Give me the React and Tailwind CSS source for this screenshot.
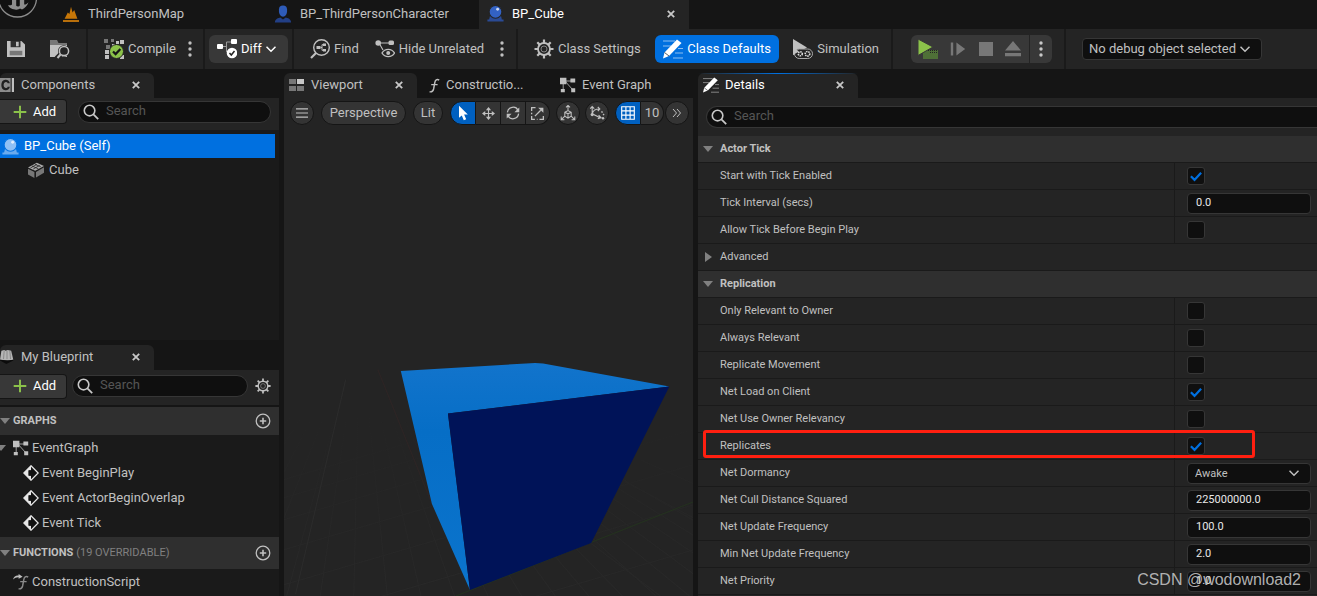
import { useState } from "react";

const graphEvents = ["Event BeginPlay", "Event ActorBeginOverlap", "Event Tick"];

const detailRows = [
  { type: "header", label: "Actor Tick" },
  { type: "check", label: "Start with Tick Enabled", value: true },
  { type: "text", label: "Tick Interval (secs)", value: "0.0" },
  { type: "check", label: "Allow Tick Before Begin Play", value: false },
  { type: "advanced", label: "Advanced" },
  { type: "header", label: "Replication" },
  { type: "check", label: "Only Relevant to Owner", value: false },
  { type: "check", label: "Always Relevant", value: false },
  { type: "check", label: "Replicate Movement", value: false },
  { type: "check", label: "Net Load on Client", value: true },
  { type: "check", label: "Net Use Owner Relevancy", value: false },
  { type: "check", label: "Replicates", value: true, marked: true },
  { type: "select", label: "Net Dormancy", value: "Awake" },
  { type: "text", label: "Net Cull Distance Squared", value: "225000000.0" },
  { type: "text", label: "Net Update Frequency", value: "100.0" },
  { type: "text", label: "Min Net Update Frequency", value: "2.0" },
  { type: "text", label: "Net Priority", value: "1.0" },
];

/* ---------- icons ---------- */

const Icon = ({ size = 20, className = "", children }) => (
  <svg
    width={size}
    height={size}
    viewBox="0 0 20 20"
    fill="none"
    className={`shrink-0 ${className}`}
    aria-hidden="true"
  >
    {children}
  </svg>
);

const CloseIcon = () => (
  <Icon size={8}>
    <path d="M2 2l16 16M18 2L2 18" stroke="currentColor" strokeWidth="4.5" />
  </Icon>
);

const SearchIcon = () => (
  <Icon size={16} className="text-[#c8c8c8]">
    <circle cx="8.2" cy="8.2" r="6.6" stroke="currentColor" strokeWidth="2" />
    <path d="M13 13l6 6" stroke="currentColor" strokeWidth="2.2" />
  </Icon>
);

const PlusIcon = () => (
  <Icon size={14} className="text-[#8bc24a]">
    <path d="M10 1v18M1 10h18" stroke="currentColor" strokeWidth="2.8" />
  </Icon>
);

const ChevronIcon = () => (
  <Icon size={10}>
    <path d="M1 5.5l9 9 9-9" stroke="currentColor" strokeWidth="3" />
  </Icon>
);

const DotsIcon = () => (
  <svg width="4" height="16" viewBox="0 0 4 16" fill="currentColor" aria-hidden="true">
    <circle cx="2" cy="2" r="1.7" />
    <circle cx="2" cy="8" r="1.7" />
    <circle cx="2" cy="14" r="1.7" />
  </svg>
);

const ArrowDown = () => (
  <svg width="10" height="6" viewBox="0 0 10 6" className="shrink-0" aria-hidden="true">
    <path d="M0 0h10L5 6z" fill="#808080" />
  </svg>
);

const ArrowRight = () => (
  <svg width="7" height="10" viewBox="0 0 7 10" className="shrink-0" aria-hidden="true">
    <path d="M0 0l7 5-7 5z" fill="#808080" />
  </svg>
);

const GearIcon = ({ size }) => (
  <Icon size={size}>
    <circle cx="10" cy="10" r="6" stroke="currentColor" strokeWidth="1.8" />
    <circle cx="10" cy="10" r="3" stroke="currentColor" strokeWidth="1" opacity=".6" />
    <path
      d="M10 0.5v4M10 15.5v4M0.5 10h4M15.5 10h4M3.3 3.3l2.8 2.8M13.9 13.9l2.8 2.8M16.7 3.3l-2.8 2.8M6.1 13.9l-2.8 2.8"
      stroke="currentColor"
      strokeWidth="2.2"
    />
  </Icon>
);

const UnrealLogo = () => (
  <svg width="38" height="18" viewBox="0 0 38 18" className="shrink-0" aria-hidden="true">
    <circle cx="17.5" cy="-2" r="19" fill="#111" stroke="#8d8d8d" strokeWidth="1.3" />
    <path
      d="M8 5c1 2.500 3 4 7 4.600 2 .5 4 0 5-1l2 1c3-1.400 5.500-4.200 6.500-7.400-1.800 1.900-3.300 2.700-4.300 2.200V0h-4.400v5.500c-.6 1.300-2.600 1.500-3.600.3V0H12v4.500C11 5.500 9.500 5.500 8 5z"
      fill="#8d8d8d"
    />
  </svg>
);

const LevelIcon = () => (
  <Icon size={16}>
    <path d="M0 17.500h20v2.500H0z" fill="#b86f0b" />
    <path d="M2 16l4-8 2 2 2-9 2 7 2-3 4 11z" fill="#c77708" />
  </Icon>
);

const CharacterIcon = () => (
  <Icon size={18}>
    <path d="M5.500 5a4.500 4.500 0 019 0v2c0 3-2 6-4.500 6S5.500 10 5.500 7z" fill="#2e5bb8" />
    <path d="M1 19.500c0-4 4-5 6-5.500l3 2 3-2c2 .5 6 1.500 6 5.500z" fill="#223f85" />
  </Icon>
);

const SphereIcon = ({ ball, base, gap }) => (
  <Icon size={17}>
    <path d="M0.500 19.500v-2.500h2l1.500-6h12l1.500 6h2v2.500z" fill={base} />
    <circle cx="10" cy="8" r="7.500" fill={ball} stroke={gap} strokeWidth="1.200" />
    <circle cx="12.500" cy="5" r="1.700" fill="#fff" opacity=".75" />
  </Icon>
);

const SaveIcon = () => (
  <Icon size={18}>
    <path d="M0 1h16l4 4v14H0z" fill="#c0c0c0" />
    <path d="M4 1h11v7H4z" fill="#303030" />
    <path d="M10 2h3v5h-3z" fill="#c0c0c0" />
    <path d="M3 12h14v5H3z" fill="#777" />
  </Icon>
);

const BrowseIcon = () => (
  <Icon size={20}>
    <path d="M0 1h7l1.500 3H17v4H0z" fill="#777" />
    <path d="M0 6h17v12H0z" fill="#c0c0c0" />
    <circle cx="13.800" cy="12" r="5.800" fill="#242424" />
    <path d="M6.500 19.500l4-4" stroke="#242424" strokeWidth="5" />
    <circle cx="14" cy="12" r="4.600" stroke="#c0c0c0" strokeWidth="1.500" />
    <path d="M10.500 15.500l-3 3.500" stroke="#c0c0c0" strokeWidth="2" />
  </Icon>
);

const CompileIcon = () => (
  <Icon size={20}>
    <path d="M0 0h4v4H0zM7 0h3v3H7zM2 6h4v4H2z" fill="#777" />
    <path d="M16 1h4v4h-4zM8 5h3v3H8zM12 2h3v3h-3zM1 11h4v4H1zM1 16h4v4H1zM16 16h4v4h-4z" fill="#c0c0c0" />
    <circle cx="12.500" cy="12.500" r="7" fill="#8bc24a" stroke="#242424" strokeWidth="1" />
    <path d="M9 12.500l2.600 2.600 4.800-5" stroke="#161616" strokeWidth="2.200" />
  </Icon>
);

const DiffIcon = () => (
  <Icon size={20} className="text-white">
    <path d="M5 7.500h4.500M14 3H9.500v10" stroke="#9a9a9a" strokeWidth="1" />
    <rect x="0" y="5" width="6" height="5" rx="1" fill="currentColor" />
    <rect x="14" y="0" width="6" height="5" rx="1" fill="currentColor" />
    <circle cx="15" cy="14" r="5.300" fill="currentColor" />
    <path d="M12.500 14l1.800 2 3.200-4" stroke="#222" strokeWidth="1.500" />
  </Icon>
);

const FindIcon = () => (
  <Icon size={20}>
    <circle cx="11.500" cy="8.500" r="7.800" stroke="currentColor" strokeWidth="1.400" />
    <path d="M6 14l-5 5" stroke="currentColor" strokeWidth="2.200" />
    <path d="M6.500 7h4v3h-4zM13 4.500h3v2.500h-3zM13 10h3v2.500h-3z" fill="currentColor" />
    <path d="M10.500 8.500h1.500M13 5.700h-1v5.600h1" stroke="currentColor" />
  </Icon>
);

const HideIcon = () => (
  <Icon size={20}>
    <path d="M4 4h12M4 4l4 7" stroke="currentColor" strokeWidth="1.100" />
    <circle cx="3.200" cy="4" r="2.800" fill="currentColor" />
    <rect x="13.500" y="1.500" width="5.500" height="4.500" rx="1.500" fill="currentColor" />
    <path d="M7 14c3-4.800 9.500-4.800 12.500 0-3 4.800-9.500 4.800-12.500 0z" stroke="currentColor" strokeWidth="1.400" />
    <circle cx="13.200" cy="14" r="2" fill="currentColor" />
  </Icon>
);

const PencilIcon = ({ size = 20 }) => (
  <Icon size={size} className="text-white">
    <path d="M0 2h12M0 7h8M12 14h8M10 19h10M15 9.500h5" stroke="currentColor" strokeWidth="1" opacity=".55" />
    <path d="M0 19.500l1.500-6L14 0.500l4.500 3.500L6 17z" fill="currentColor" />
    <path d="M1.500 13.500L6 17" stroke="#333" strokeWidth=".8" />
  </Icon>
);

const SimulationIcon = () => (
  <Icon size={20}>
    <path d="M0 0l14 8.500L0 16z" fill="currentColor" />
    <rect x="1.500" y="10" width="18" height="9.500" rx="4.700" fill="#242424" stroke="#aaa" strokeWidth="1" />
    <path d="M0 8v8l6-3.600z" fill="currentColor" />
    <circle cx="7.300" cy="14.800" r="2" stroke="#ddd" strokeWidth="1.600" strokeDasharray="1.400 .7" />
    <circle cx="14.500" cy="14.800" r="2.300" stroke="#ddd" strokeWidth="1.600" strokeDasharray="1.400 .7" />
  </Icon>
);

const PlayIcon = () => (
  <Icon size={20}>
    <path d="M5 11h15v9H5z" fill="#4f7037" />
    <path d="M10 11.500h10M12 13.500h8" stroke="#242424" strokeWidth="1" strokeDasharray="1 1" />
    <path d="M0 0l15 8L0 16.500z" fill="#8bc24a" stroke="#383838" strokeWidth="1" />
  </Icon>
);

const GraphIcon = () => (
  <Icon size={16}>
    <path d="M5 5h11M4 5v12M7 6l9 10" stroke="currentColor" strokeWidth="1" />
    <path d="M0 1h8v8H0zM13 2h6v5h-6zM1 15h5v4H1zM14 14h5v5h-5z" fill="currentColor" />
  </Icon>
);

const ComponentsIcon = () => (
  <Icon size={14}>
    <path d="M0 0h20v20H0z" fill="#8c8c8c" />
    <path d="M12.500 7.500c-.5-5-9-5-9 2.500s8.500 7.500 9 2.500" stroke="#202020" strokeWidth="3.200" />
    <path d="M16 0v20" stroke="#202020" strokeWidth="1.600" />
    <path d="M17 0h3v20h-3z" fill="#c0c0c0" />
  </Icon>
);

const BookIcon = () => (
  <Icon size={14}>
    <path d="M0 14L2 1l4-1 2 1 3-1 5 1 3 13-6 1z" fill="#b5b5b5" />
    <path d="M0 15l9 5 10-5v-1l-9 1-10-1z" fill="#0c0c0c" />
    <path d="M6 1L5 13M10 1v12M14 1l1 12" stroke="#777" />
  </Icon>
);

const ViewportIcon = () => (
  <svg width="15" height="12" viewBox="0 0 15 12" aria-hidden="true">
    <path d="M0 0h7v5H0zM0 7h7v5H0zM8 7h7v5H8z" fill="#777" />
    <path d="M8 0h7v5H8z" fill="#c8c8c8" />
  </svg>
);

// italic f drawn as a stroke
const FunctionIcon = ({ arrow }) => (
  <Icon size={16}>
    {arrow && (
      <path d="M0 7c1-4 4-5.500 7-5V0l5 3.500L7 6V4.200C4.500 4 2.500 5 0 7z" fill="#c0c0c0" />
    )}
    <path
      d="M19 4c-3-2-5 0-5.500 3L12 15c-.7 3-2 4-5 3.500M9 9.500h8"
      stroke={arrow ? "#8a8a8a" : "currentColor"}
      strokeWidth="1.800"
    />
  </Icon>
);

const EventIcon = () => (
  <Icon size={16} className="text-[#e6e6e6]">
    <path d="M10 1l9 9-9 9-9-9z" fill="#111" stroke="currentColor" strokeWidth="1.600" />
    <path d="M10 1v5.500H7v7h3V19l-9-9z" fill="currentColor" />
    <path d="M7 7h4V4.500l4.500 5.500-4.500 5.500V13H7z" fill="#111" />
  </Icon>
);

const CubeIcon = () => (
  <Icon size={16}>
    <path d="M0 7l11-6 9 4-11 6z" fill="#aaa" />
    <path d="M0 8.500l8 4v7.500l-8-4.500zM10 12.500l10-6v7l-10 6z" fill="#777" />
    <path d="M3 7.500l8-4.500M6.500 8.800l8-4.500M5 5l8 3.500M9 3l7 3" stroke="#252525" strokeWidth="1" />
  </Icon>
);

const AddCircleIcon = () => (
  <Icon size={16}>
    <circle cx="10" cy="10" r="8.500" stroke="currentColor" strokeWidth="1.600" />
    <path d="M10 6v8M6 10h8" stroke="currentColor" strokeWidth="2" />
  </Icon>
);

/* ---------- shared parts ---------- */

const PanelTab = ({ icon, label, className = "", active = true, closable = true, hot }) => (
  <div
    className={`flex h-[25px] shrink-0 items-center pb-[2px] ${
      active ? "rounded-t-md bg-[#242424]" : ""
    } ${hot ? "relative text-white" : ""} ${className}`}
  >
    {hot && (
      <span className="absolute inset-x-0 top-0 h-px bg-linear-to-r from-transparent via-[#0070e0] to-transparent" />
    )}
    {icon}
    <span>{label}</span>
    {closable && (
      <button type="button" aria-label={`Close ${label}`} className="ml-auto text-[#c8c8c8]">
        <CloseIcon />
      </button>
    )}
  </div>
);

const SearchBox = ({ label, className = "" }) => (
  <label
    className={`flex items-center gap-[7px] border border-[#363636] bg-[#0f0f0f] pl-1 ${className}`}
  >
    <SearchIcon />
    <input
      type="text"
      aria-label={label}
      placeholder="Search"
      className="h-5 w-full min-w-0 bg-transparent pb-[2px] text-[13px] placeholder-[#555] outline-none"
    />
  </label>
);

const AddButton = () => (
  <button
    type="button"
    className="flex h-[25px] w-[67px] shrink-0 items-center gap-[6px] rounded-r-sm border border-l-0 border-[#151515] bg-[#383838] pl-[13px] text-white"
  >
    <PlusIcon />
    Add
  </button>
);

const Divider = () => <span className="h-10 w-[2px] shrink-0 bg-[#1a1a1a]" />;

const ToolButton = ({ icon, children, className = "" }) => (
  <button
    type="button"
    className={`flex h-7 shrink-0 items-center gap-1 whitespace-nowrap ${className}`}
  >
    {icon}
    {children}
  </button>
);

/* ---------- page sections ---------- */

const FileTabs = () => (
  <nav className="flex h-[29px] items-center">
    <div className="flex w-[63px] shrink-0 self-start">
      <UnrealLogo />
    </div>
    <div className="flex h-full grow items-center">
      <a href="#map" className="flex w-[211px] shrink-0 items-center gap-[9px] pb-[2px]">
        <LevelIcon />
        ThirdPersonMap
      </a>
      <a href="#character" className="flex w-[205px] shrink-0 items-center gap-2 pb-[2px]">
        <CharacterIcon />
        BP_ThirdPersonCharacter
      </a>
      <div className="flex h-full w-[210px] shrink-0 items-center bg-[#242424] pr-[14px] pb-[2px] pl-2 text-white">
        <SphereIcon ball="#3362c4" base="#2a4a94" gap="#242424" />
        <a href="#cube" className="ml-2">
          BP_Cube
        </a>
        <button type="button" aria-label="Close BP_Cube" className="ml-auto text-[#c8c8c8]">
          <CloseIcon />
        </button>
      </div>
    </div>
  </nav>
);

const Toolbar = () => (
  <header className="flex h-10 items-center bg-[#242424]">
    <div className="flex w-[86px] shrink-0 items-center gap-[25px] pl-[7px]">
      <button type="button" aria-label="Save">
        <SaveIcon />
      </button>
      <button type="button" aria-label="Browse">
        <BrowseIcon />
      </button>
    </div>
    <Divider />
    <div className="flex w-[115px] shrink-0 items-center justify-between pr-[11px] pl-4">
      <ToolButton icon={<CompileIcon />}>Compile</ToolButton>
      <button type="button" aria-label="Compile options">
        <DotsIcon />
      </button>
    </div>
    <Divider />
    <div className="w-[87px] shrink-0 px-1">
      <ToolButton icon={<DiffIcon />} className="w-full rounded-md bg-[#383838] pl-2 text-white">
        Diff <ChevronIcon />
      </ToolButton>
    </div>
    <Divider />
    <div className="flex w-[222px] shrink-0 items-center justify-between pr-3 pl-4">
      <ToolButton icon={<FindIcon />}>Find</ToolButton>
      <ToolButton icon={<HideIcon />}>Hide Unrelated</ToolButton>
      <button type="button" aria-label="Hide options">
        <DotsIcon />
      </button>
    </div>
    <Divider />
    <div className="flex w-[373px] shrink-0 items-center justify-between pr-3 pl-4">
      <ToolButton icon={<GearIcon size={20} />}>Class Settings</ToolButton>
      <ToolButton icon={<PencilIcon />} className="rounded-md bg-[#0070e0] px-2 text-white">
        Class Defaults
      </ToolButton>
      <ToolButton icon={<SimulationIcon />}>Simulation</ToolButton>
    </div>
    <Divider />
    <div className="w-[171px] shrink-0 pl-[18px]">
      <div className="flex h-7 w-[141px] overflow-hidden rounded-md bg-[#383838] text-[#777]">
        <div className="flex w-[118px] items-center justify-between pr-2 pl-[7px]">
          <button type="button" aria-label="Play">
            <PlayIcon />
          </button>
          <button type="button" aria-label="Step">
            <Icon size={16}>
              <path d="M1 2h3v16H1zM8 2l11 8-11 8z" fill="currentColor" />
            </Icon>
          </button>
          <button type="button" aria-label="Stop">
            <Icon size={14}>
              <path d="M0 0h20v20H0z" fill="currentColor" />
            </Icon>
          </button>
          <button type="button" aria-label="Eject">
            <Icon size={16}>
              <path d="M10 0l10 12H0zM0 15h20v4H0z" fill="currentColor" />
            </Icon>
          </button>
        </div>
        <button
          type="button"
          aria-label="Play options"
          className="flex grow items-center justify-center border-l border-[#242424] text-[#c8c8c8]"
        >
          <DotsIcon />
        </button>
      </div>
    </div>
    <Divider />
    <label className="ml-4 grid w-[180px] shrink-0 items-center">
      <select
        aria-label="Debug object"
        className="col-start-1 row-start-1 h-[22px] w-full appearance-none rounded border border-[#363636] bg-[#0f0f0f] pl-[6px] text-[13px] leading-5"
      >
        <option>No debug object selected</option>
      </select>
      <span className="pointer-events-none col-start-1 row-start-1 mr-3 justify-self-end">
        <ChevronIcon />
      </span>
    </label>
  </header>
);

const ComponentsPanel = () => (
  <section className="flex h-[267px] flex-col">
    <PanelTab icon={<ComponentsIcon />} label="Components" className="w-[154px] gap-[7px] pr-[14px]" />
    <div className="flex h-8 shrink-0 items-start gap-[11px] bg-[#242424] pt-px pr-2">
      <AddButton />
      <SearchBox label="Search components" className="mt-[2px] grow rounded-full" />
    </div>
    <ul className="grow bg-[#1a1a1a] pt-1">
      <li className="mr-1 flex h-6 items-center gap-[5px] bg-[#0070e0] pl-[2px] text-white">
        <SphereIcon ball="#8fc0f5" base="#6aabee" gap="#0070e0" />
        BP_Cube (Self)
      </li>
      <li className="flex h-6 items-center gap-[5px] pl-7">
        <CubeIcon />
        Cube
      </li>
    </ul>
  </section>
);

const SectionHeader = ({ label, note, className }) => (
  <div className={`flex items-center gap-[3px] bg-[#2f2f2f] pr-2 text-[11px] ${className}`}>
    <ArrowDown />
    <h2 className="font-bold">{label}</h2>
    {note && <span className="text-[#808080]">{note}</span>}
    <button type="button" aria-label={`Add to ${label}`} className="ml-auto">
      <AddCircleIcon />
    </button>
  </div>
);

const BlueprintPanel = () => (
  <section className="mt-[5px] flex grow flex-col">
    <PanelTab icon={<BookIcon />} label="My Blueprint" className="w-[154px] gap-[7px] pr-[14px]" />
    <div className="flex h-[35px] shrink-0 items-center gap-[5px] bg-[#242424] pr-2 pb-[3px]">
      <AddButton />
      <SearchBox label="Search blueprint" className="mr-[2px] grow rounded-full" />
      <button type="button" aria-label="Blueprint settings">
        <GearIcon size={16} />
      </button>
    </div>
    <div className="mt-[2px] grow bg-[#1a1a1a]">
      <SectionHeader label="GRAPHS" className="h-7" />
      <ul className="pb-[2px]">
        <li className="flex h-[25px] items-center gap-[3px]">
          <span className="-ml-1 mr-1">
            <ArrowDown />
          </span>
          <GraphIcon />
          EventGraph
        </li>
        {graphEvents.map((name) => (
          <li key={name} className="flex h-[25px] items-center gap-[3px] pl-[23px]">
            <EventIcon />
            {name}
          </li>
        ))}
      </ul>
      <SectionHeader label="FUNCTIONS" note="(19 OVERRIDABLE)" className="h-8" />
      <div className="flex h-[25px] items-center gap-[3px] pl-[13px]">
        <FunctionIcon arrow />
        ConstructionScript
      </div>
    </div>
  </section>
);

const pill =
  "flex h-6 shrink-0 items-center justify-center border border-[#151515] bg-[#343434]";

// perspective floor, lines fan out from a point above the horizon
const floorFan = Array.from({ length: 26 }, (_, i) => i * 34 - 280);
const floorRows = [480, 498, 520, 550, 585, 625, 670];

const Scene = () => (
  <svg
    viewBox="284 131 409 465"
    preserveAspectRatio="xMidYMax slice"
    className="block h-0 min-h-0 w-full grow"
    role="img"
    aria-label="Blue cube on a grid floor"
  >
    <defs>
      <linearGradient id="floorFade" x1="0" y1="0" x2="0" y2="1">
        <stop offset="0" stopColor="#242424" />
        <stop offset=".3" stopColor="#242424" />
        <stop offset="1" stopColor="#242424" stopOpacity="0" />
      </linearGradient>
      <linearGradient id="cubeSide" x1="0" y1="0" x2="0" y2="1">
        <stop offset="0" stopColor="#1274cc" />
        <stop offset=".3" stopColor="#066ec6" />
        <stop offset="1" stopColor="#0b74cd" />
      </linearGradient>
    </defs>
    <g stroke="#292929" strokeWidth="1">
      {floorFan.map((x) => (
        <path key={x} d={`M${360 + (x - 100) * 0.12} 360L${x + 260} 600`} />
      ))}
      {floorRows.map((y) => (
        <path key={y} d={`M284 ${y}L693 ${y - 120}`} />
      ))}
      <path d="M590 543l103 78M625 482l68 36M640 460l53 24" />
    </g>
    <path d="M284 340h409v250H284z" fill="url(#floorFade)" />
    <path d="M346 380L325 470 296 594" stroke="#2c2c2c" fill="none" />
    <path d="M378 370l54 134" stroke="#2e2525" />
    <path d="M456 596l237-94" stroke="#24321f" />
    <path
      d="M401 371.500L535 363.500L543 364L669 387L448 414L470 590L432 504z"
      fill="url(#cubeSide)"
    />
    <path d="M448 414L669 387L591 543L470 590z" fill="#001358" />
  </svg>
);

const ViewportPanel = () => (
  <main className="flex w-[409px] shrink-0 flex-col">
    <div className="flex">
      <PanelTab icon={<ViewportIcon />} label="Viewport" className="w-[133px] gap-[7px] pr-[14px] pl-[5px]" />
      <PanelTab
        icon={<FunctionIcon />}
        label="Constructio..."
        active={false}
        closable={false}
        className="w-[138px] gap-[6px] pl-[7px]"
      />
      <PanelTab
        icon={<GraphIcon />}
        label="Event Graph"
        active={false}
        closable={false}
        className="gap-[6px] pl-[5px]"
      />
    </div>
    <div className="flex grow flex-col bg-[#242424]">
      <div className="flex h-8 shrink-0 items-center gap-[7px] pb-[2px] pl-[6px]">
        <button type="button" aria-label="Viewport options" className={`${pill} w-6 rounded-full`}>
          <Icon size={12}>
            <path d="M0 3h20M0 10h20M0 17h20" stroke="currentColor" strokeWidth="2" />
          </Icon>
        </button>
        <button type="button" className={`${pill} w-[85px] rounded-full`}>
          Perspective
        </button>
        <button type="button" className={`${pill} w-[30px] rounded-full`}>
          Lit
        </button>
        <div className="-mr-px flex">
          <button type="button" aria-label="Select" className={`${pill} w-[26px] rounded-l-full bg-[#0060c0]! text-white`}>
            <Icon size={16}>
              <path d="M5 1v15l3.500-3 2.500 6 3-1.300-2.600-5.700H16z" fill="currentColor" />
            </Icon>
          </button>
          <button type="button" aria-label="Move" className={`${pill} w-[25px] border-l-0`}>
            <Icon size={13}>
              <path d="M10 2v16M2 10h16" stroke="currentColor" strokeWidth="1.800" />
              <path d="M10 0l4 5H6zM10 20l-4-5h8zM0 10l5-4v8zM20 10l-5 4V6z" fill="currentColor" />
            </Icon>
          </button>
          <button type="button" aria-label="Rotate" className={`${pill} w-[25px] border-l-0`}>
            <Icon size={14}>
              <path d="M2 9c1-8 12-10 15-3M18 11c-1 8-12 10-15 3" stroke="currentColor" strokeWidth="1.800" />
              <path d="M19 2v7h-7zM1 18v-7h7z" fill="currentColor" />
            </Icon>
          </button>
          <button type="button" aria-label="Scale" className={`${pill} w-6 rounded-r-full border-l-0`}>
            <Icon size={13}>
              <path d="M1 6V1h6M19 14v5h-6M1 9v2M1 14v5h5M9 19h1" stroke="currentColor" strokeWidth="2" />
              <path d="M6 14l9-9" stroke="currentColor" strokeWidth="2" />
              <path d="M11 1h8v8z" fill="currentColor" />
            </Icon>
          </button>
        </div>
        <button type="button" aria-label="World space" className={`${pill} w-6 rounded-full`}>
          <Icon size={16}>
            <path
              d="M10 1v6M6 9l4-2 4 2v5l-4 2.500L6 14zM6 9l4 2 4-2M10 11v5M6 14l-4 4M14 14l4 4M1.500 14.500v4h4M18.500 14.500v4h-4M7.500 3L10 .5 12.500 3"
              stroke="currentColor"
              strokeWidth="1.300"
            />
          </Icon>
        </button>
        <button type="button" aria-label="Surface snapping" className={`${pill} -ml-[2px] w-6 rounded-full`}>
          <Icon size={16}>
            <path
              d="M4 3v8l10 5M4 11c1-5 4-6 9-6M1.500 4.500L4 2l2.500 2.500M11 2.500L13.500 5 11 7.500M12 12.500l3 3.500-4 1"
              stroke="currentColor"
              strokeWidth="1.400"
            />
            <path d="M15.500 8l1.500 1.500M17.500 11.500l1.500 1" stroke="currentColor" strokeWidth="1.800" />
            <circle cx="4" cy="12" r="2" fill="currentColor" />
            <circle cx="17.500" cy="16.500" r="1.500" fill="currentColor" />
          </Icon>
        </button>
        <div className="-mr-[6px] -ml-px flex">
          <button type="button" aria-label="Grid snap" className={`${pill} w-[26px] rounded-l-full bg-[#0060c0]! text-white`}>
            <Icon size={14}>
              <path d="M1 1h18v18H1zM7 1v18M13 1v18M1 7h18M1 13h18" stroke="currentColor" strokeWidth="1.600" />
            </Icon>
          </button>
          <button type="button" className={`${pill} w-[23px] rounded-r-full border-l-0`}>
            10
          </button>
        </div>
        <button type="button" aria-label="More" className={`${pill} w-6 rounded-full`}>
          <Icon size={10}>
            <path d="M2 2l7 8-7 8M10 2l7 8-7 8" stroke="currentColor" strokeWidth="2" />
          </Icon>
        </button>
      </div>
      <Scene />
    </div>
  </main>
);

const fieldClass =
  "h-[21px] w-full appearance-none rounded border border-[#363636] bg-[#0f0f0f] pb-[2px] text-[11px] outline-none";

const DetailRow = ({ row }) => {
  const [value, setValue] = useState(row.value);
  const id = row.label.toLowerCase().replace(/[^a-z]+/g, "-");

  if (row.type === "header") {
    return (
      <div className="flex h-[27px] items-center gap-[7px] border-b border-[#1a1a1a] bg-[#2f2f2f] pl-[5px]">
        <ArrowDown />
        <h2 className="font-bold">{row.label}</h2>
      </div>
    );
  }

  if (row.type === "advanced") {
    return (
      <div className="flex h-[27px] items-center gap-[8px] border-b border-[#1a1a1a] pl-[7px]">
        <ArrowRight />
        {row.label}
      </div>
    );
  }

  return (
    <div className="relative flex h-[27px] border-b border-[#1a1a1a]">
      <label htmlFor={id} className="grow pl-[22px] leading-[26px]">
        {row.label}
      </label>
      <div className="flex w-[143px] shrink-0 items-center border-l border-[#1a1a1a] pr-[6px] pl-3">
        {row.type === "check" && (
          <span className="grid place-items-center">
            <input
              id={id}
              type="checkbox"
              checked={value}
              onChange={(e) => setValue(e.target.checked)}
              className="col-start-1 row-start-1 size-[18px] appearance-none rounded-[3px] border border-[#363636] bg-[#0f0f0f]"
            />
            {value && (
              <Icon size={12} className="pointer-events-none col-start-1 row-start-1">
                <path d="M1.500 10.500l6 6L18.500 4.500" stroke="#0070e0" strokeWidth="3.800" />
              </Icon>
            )}
          </span>
        )}
        {row.type === "text" && (
          <input
            id={id}
            type="text"
            value={value}
            onChange={(e) => setValue(e.target.value)}
            className={`${fieldClass} pl-2 text-[#e8e8e8]`}
          />
        )}
        {row.type === "select" && (
          <span className="grid w-full items-center">
            <select id={id} className={`${fieldClass} col-start-1 row-start-1 pl-[7px]`}>
              <option>{value}</option>
            </select>
            <span className="pointer-events-none col-start-1 row-start-1 mr-3 justify-self-end">
              <ChevronIcon />
            </span>
          </span>
        )}
      </div>
      {row.marked && (
        <span className="pointer-events-none absolute -top-[3px] right-[62px] left-[5px] z-10 h-7 rounded-[3px] border-3 border-[#ff1f10]" />
      )}
    </div>
  );
};

const DetailsPanel = () => (
  <aside className="flex min-w-0 grow flex-col">
    <PanelTab icon={<PencilIcon size={16} />} label="Details" hot className="w-[160px] gap-[6px] pr-[14px] pl-[5px]" />
    <div className="grow bg-[#242424] pt-2 text-[11px]">
      <SearchBox label="Search details" className="mb-2 ml-2 rounded-l-full border-r-0" />
      {detailRows.map((row) => (
        <DetailRow key={row.label} row={row} />
      ))}
    </div>
  </aside>
);

const App = () => {
  return (
    <div className="relative flex min-h-screen flex-col overflow-hidden bg-[#151515] font-[Roboto,sans-serif] text-[13px] leading-5 text-[#c0c0c0]">
      <FileTabs />
      <Toolbar />
      <div className="flex grow gap-[5px] pt-1">
        <div className="flex w-[279px] shrink-0 flex-col">
          <ComponentsPanel />
          <BlueprintPanel />
        </div>
        <ViewportPanel />
        <DetailsPanel />
      </div>
      <span className="pointer-events-none absolute right-4 bottom-[6px] z-20 font-['Liberation_Sans',sans-serif] text-[16px] text-[#c4c4c4]/90">
        CSDN @wodownload2
      </span>
    </div>
  );
};

export default App;
